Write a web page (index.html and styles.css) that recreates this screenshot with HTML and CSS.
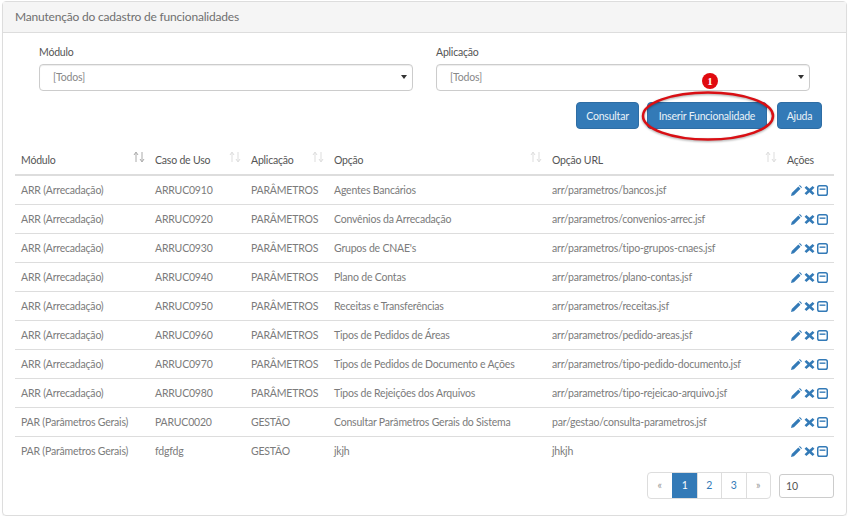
FILE: index.html
```html
<!DOCTYPE html>
<html lang="pt-BR">
<head>
  <meta charset="UTF-8">
  <meta name="viewport" content="width=device-width, initial-scale=1.0">
  <title>Manutenção do cadastro de funcionalidades</title>
  <link rel="stylesheet" href="styles.css">
</head>
<body>
  <!-- Ícones reutilizados na tabela -->
  <svg class="defs" width="0" height="0">
    <symbol id="i-sort" viewBox="0 0 12 12">
      <path d="M3 11V2M1 4l2-3 2 3" fill="none" stroke="currentColor"/>
      <path d="M9 1v9M7 8l2 3 2-3" fill="none" stroke="currentColor"/>
    </symbol>
    <symbol id="i-edit" viewBox="0 0 12 12">
      <path d="M0 12l.8-3.200L8 1.600 10.400 4 3.200 11.200zM8.800.8l.8-.8L12 2.400l-.8.8z" fill="currentColor"/>
    </symbol>
    <symbol id="i-del" viewBox="0 0 12 12">
      <path d="M2.600 1L6 4.200 9.400 1 11.400 3 8.200 6 11.400 9 9.400 11 6 7.800 2.600 11 .6 9 3.800 6 .6 3z" fill="currentColor"/>
    </symbol>
    <symbol id="i-win" viewBox="0 0 12 12">
      <rect x=".8" y=".8" width="10.400" height="10.400" rx="2" fill="none" stroke="currentColor" stroke-width="1.600"/>
      <path d="M2.800 3.800h6.400v1.500H2.800z" fill="currentColor"/>
    </symbol>
  </svg>

  <div class="painel">
    <div class="painel-titulo">Manutenção do cadastro de funcionalidades</div>
    <div class="painel-corpo">

      <!-- Filtros -->
      <div class="filtros">
        <div class="campo">
          <label class="rotulo">Módulo</label>
          <div class="combo">[Todos]<span class="seta"></span></div>
        </div>
        <div class="campo">
          <label class="rotulo">Aplicação</label>
          <div class="combo">[Todos]<span class="seta"></span></div>
        </div>
      </div>

      <!-- Botões -->
      <div class="botoes">
        <button class="botao">Consultar</button>
        <div class="destaque">
          <button class="botao">Inserir Funcionalidade</button>
          <svg class="elipse" width="136" height="54" viewBox="0 0 136 54">
            <ellipse cx="68" cy="27" rx="65" ry="23.500" fill="none" stroke="#d90f14" stroke-width="2.500"/>
          </svg>
          <span class="marca">1</span>
        </div>
        <button class="botao botao-ajuda">Ajuda</button>
      </div>

      <!-- Tabela -->
      <table class="tabela">
        <colgroup>
          <col class="c1"><col class="c2"><col class="c3"><col class="c4"><col class="c5"><col class="c6">
        </colgroup>
        <thead>
          <tr>
            <th>Módulo<svg class="ordem ordem-ativa"><use href="#i-sort"/></svg></th>
            <th>Caso de Uso<svg class="ordem"><use href="#i-sort"/></svg></th>
            <th>Aplicação<svg class="ordem"><use href="#i-sort"/></svg></th>
            <th>Opção<svg class="ordem"><use href="#i-sort"/></svg></th>
            <th>Opção URL<svg class="ordem"><use href="#i-sort"/></svg></th>
            <th>Ações</th>
          </tr>
        </thead>
        <tbody id="linhas"></tbody>
      </table>

      <!-- Paginação -->
      <div class="rodape">
        <div class="paginas">
          <span class="pagina apagada">«</span>
          <span class="pagina ativa">1</span>
          <span class="pagina">2</span>
          <span class="pagina">3</span>
          <span class="pagina apagada">»</span>
        </div>
        <div class="qtd">10</div>
      </div>
    </div>
  </div>

  <script src="linhas.js"></script>
</body>
</html>
```

FILE: linhas.js
```js
// Linhas da tabela de funcionalidades
const dados = [
  ['ARR (Arrecadação)', 'ARRUC0910', 'PARÂMETROS', 'Agentes Bancários', 'arr/parametros/bancos.jsf'],
  ['ARR (Arrecadação)', 'ARRUC0920', 'PARÂMETROS', 'Convênios da Arrecadação', 'arr/parametros/convenios-arrec.jsf'],
  ['ARR (Arrecadação)', 'ARRUC0930', 'PARÂMETROS', "Grupos de CNAE's", 'arr/parametros/tipo-grupos-cnaes.jsf'],
  ['ARR (Arrecadação)', 'ARRUC0940', 'PARÂMETROS', 'Plano de Contas', 'arr/parametros/plano-contas.jsf'],
  ['ARR (Arrecadação)', 'ARRUC0950', 'PARÂMETROS', 'Receitas e Transferências', 'arr/parametros/receitas.jsf'],
  ['ARR (Arrecadação)', 'ARRUC0960', 'PARÂMETROS', 'Tipos de Pedidos de Áreas', 'arr/parametros/pedido-areas.jsf'],
  ['ARR (Arrecadação)', 'ARRUC0970', 'PARÂMETROS', 'Tipos de Pedidos de Documento e Ações', 'arr/parametros/tipo-pedido-documento.jsf'],
  ['ARR (Arrecadação)', 'ARRUC0980', 'PARÂMETROS', 'Tipos de Rejeições dos Arquivos', 'arr/parametros/tipo-rejeicao-arquivo.jsf'],
  ['PAR (Parâmetros Gerais)', 'PARUC0020', 'GESTÃO', 'Consultar Parâmetros Gerais do Sistema', 'par/gestao/consulta-parametros.jsf'],
  ['PAR (Parâmetros Gerais)', 'fdgfdg', 'GESTÃO', 'jkjh', 'jhkjh']
];

const acoes = ['i-edit', 'i-del', 'i-win']
  .map(id => `<svg class="acao"><use href="#${id}"/></svg>`)
  .join('');

document.getElementById('linhas').innerHTML = dados
  .map(linha => `<tr>${linha.map(c => `<td>${c}</td>`).join('')}<td class="acoes">${acoes}</td></tr>`)
  .join('');
```

FILE: styles.css
```css
body {
  margin: 0;
  background: #fff;
  font-family: "Lato", "Open Sans", sans-serif;
  font-size: 10.5px;
  letter-spacing: -0.2px;
  color: #7b7b7b;
}

.defs {
  display: block;
  height: 0;
}

.painel {
  margin: 1px 2px 0;
  width: 845px;
  height: 515px;
  box-sizing: border-box;
  border: 1px solid #ddd;
  border-radius: 4px;
  box-shadow: 0 1px 1px rgba(0, 0, 0, .05);
}

.painel-titulo {
  height: 30px;
  padding: 0 12px;
  line-height: 30px;
  background: #f5f5f5;
  border-bottom: 1px solid #ddd;
  font-size: 12px;
  color: #707070;
}

.painel-corpo {
  padding: 0 12px;
}

.filtros {
  display: flex;
  gap: 23px;
  padding: 11px 24px 0;
}

.campo {
  width: 374px;
}

.rotulo {
  display: block;
  height: 20px;
  line-height: 16px;
  color: #555;
}

.combo {
  position: relative;
  height: 27px;
  box-sizing: border-box;
  padding-left: 13px;
  line-height: 25px;
  border: 1px solid #ccc;
  border-radius: 4px;
  box-shadow: inset 0 1px 1px rgba(0, 0, 0, .075);
  color: #888;
}

.seta {
  position: absolute;
  right: 5px;
  top: 10px;
  border-style: solid;
  border-width: 4px 3px 0;
  border-color: #333 transparent transparent;
}

.botoes {
  display: flex;
  justify-content: flex-end;
  margin-top: 11px;
  padding-right: 12px;
}

.botao {
  height: 27px;
  width: 63px;
  padding: 0;
  background: #337ab7;
  border: 1px solid #2e6da4;
  border-radius: 4px;
  color: #eaf2f8;
  font: inherit;
  letter-spacing: inherit;
  white-space: nowrap;
}

.botao-ajuda {
  width: 45px;
  margin-left: 10px;
}

.destaque {
  position: relative;
  margin-left: 8px;
}

.destaque .botao {
  width: 120px;
}

.elipse {
  position: absolute;
  left: -7px;
  top: -13px;
  overflow: visible;
  filter: drop-shadow(0 1px 1px rgba(0, 0, 0, .35));
}

.marca {
  position: absolute;
  left: 55px;
  top: -29px;
  width: 16px;
  height: 16px;
  border-radius: 50%;
  background: #e00a0f;
  color: #fff;
  font-family: "Liberation Serif", serif;
  font-size: 11px;
  font-weight: bold;
  line-height: 16px;
  text-align: center;
}

.tabela {
  width: 819px;
  margin-top: 16px;
  border-collapse: collapse;
  table-layout: fixed;
}

.c1 { width: 134px; }
.c2 { width: 96px; }
.c3 { width: 83px; }
.c4 { width: 218px; }
.c5 { width: 235px; }
.c6 { width: 53px; }

.tabela th {
  position: relative;
  height: 29px;
  padding: 0 6px;
  text-align: left;
  font-weight: normal;
  color: #555;
  border-bottom: 2px solid #ddd;
}

.tabela td {
  height: 28px;
  padding: 0 6px;
  border-bottom: 1px solid #ddd;
  white-space: nowrap;
}

.tabela tbody tr:last-child td {
  border-bottom: 0;
}

.ordem {
  position: absolute;
  right: 4px;
  top: 6px;
  width: 12px;
  height: 12px;
  color: #ddd;
}

.ordem-ativa {
  color: #aaa;
}

.tabela .acoes {
  padding: 0 0 0 10px;
  font-size: 0;
}

.acao {
  width: 11px;
  height: 11px;
  margin-right: 2px;
  color: #337ab7;
}

.rodape {
  display: flex;
  justify-content: flex-end;
  align-items: flex-start;
  gap: 8px;
  margin-top: 7px;
}

.paginas {
  display: flex;
  border: 1px solid #ddd;
  border-radius: 4px;
}

.pagina {
  width: 24.500px;
  height: 25px;
  line-height: 25px;
  text-align: center;
  color: #337ab7;
  border-left: 1px solid #ddd;
  box-sizing: border-box;
}

.pagina:first-child {
  border-left: 0;
}

.apagada {
  color: #999;
}

.ativa {
  background: #337ab7;
  color: #fff;
  border-left-color: #337ab7;
}

.qtd {
  width: 55px;
  height: 24px;
  margin-top: 2px;
  box-sizing: border-box;
  padding-left: 6px;
  line-height: 22px;
  border: 1px solid #ccc;
  border-radius: 3px;
  color: #555;
}
```
